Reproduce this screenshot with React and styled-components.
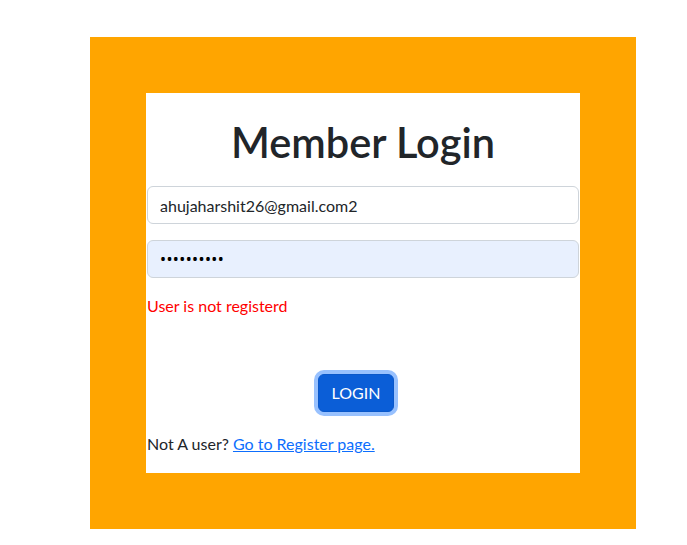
import React from "react";
import styled, { createGlobalStyle } from "styled-components";

const Global = createGlobalStyle`
  html, body { margin: 0; padding: 0; background: #fff; }
  body { font-family: Lato, "Noto Sans", sans-serif; color: #212529; font-size: 16px; }
  * { box-sizing: border-box; }
`;

const Frame = styled.div`
  margin: 37px 0 0 90px;
  width: 546px;
  height: 492px;
  background: #ffa500;
  padding: 56px;
`;

const Card = styled.form`
  background: #fff;
  width: 434px;
  height: 380px;
  padding: 25px 1px 0 1px;
  display: flex;
  flex-direction: column;
`;

const Title = styled.h1`
  margin: 0 0 20px;
  font-size: 41.5px;
  line-height: 48px;
  font-weight: 600;
  text-align: center;
  color: #212529;
`;

const Input = styled.input`
  display: block;
  width: 100%;
  height: 38px;
  padding: 6px 12px;
  font-family: inherit;
  font-size: 16px;
  line-height: 24px;
  color: #212529;
  background: #fff;
  border: 1px solid #ced4da;
  border-radius: 6px;
  margin-bottom: 16px;
  outline: none;
`;

const PasswordInput = styled(Input)`
  font-family: "Noto Sans", sans-serif;
  letter-spacing: 0.4px;
  color: #000;
  background: #e8f0fe;
`;

const Error = styled.div`
  color: #ff0000;
  font-size: 16px;
  line-height: 24px;
  margin-bottom: 56px;
`;

const ButtonRow = styled.div`
  display: flex;
  justify-content: center;
  padding-right: 14px;
  margin-bottom: 20px;
`;

const Button = styled.button`
  font-family: inherit;
  font-size: 16px;
  line-height: 24px;
  padding: 6px 13px;
  color: #fff;
  background: #0b5ed7;
  border: 1px solid #0a58ca;
  border-radius: 6px;
  box-shadow: 0 0 0 4px #98c1fe;
`;

const Footer = styled.p`
  margin: 0;
  font-size: 16px;
  line-height: 24px;
`;

const Link = styled.a`
  color: #0d6efd;
  text-decoration: underline;
`;

export default function App() {
  return (
    <>
      <Global />
      <Frame>
        <Card onSubmit={(e) => e.preventDefault()}>
          <Title>Member Login</Title>
          <Input type="email" defaultValue="ahujaharshit26@gmail.com2" />
          <PasswordInput type="password" defaultValue="1234567890" />
          <Error>User is not registerd</Error>
          <ButtonRow>
            <Button type="submit">LOGIN</Button>
          </ButtonRow>
          <Footer>
            Not A user? <Link href="#">Go to Register page.</Link>
          </Footer>
        </Card>
      </Frame>
    </>
  );
}
